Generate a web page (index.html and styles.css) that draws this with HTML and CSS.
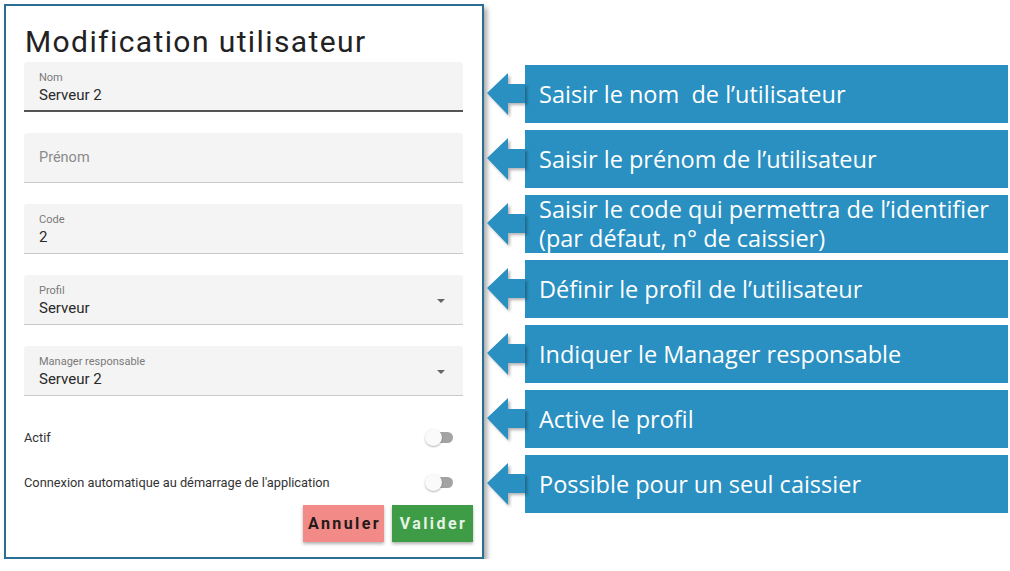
FILE: index.html
```html
<!DOCTYPE html>
<html lang="fr">
<head>
<meta charset="utf-8">
<title>Modification utilisateur</title>
<link rel="stylesheet" href="styles.css">
</head>
<body>
<div class="page">
  <section class="panel">
    <h1 class="title">Modification utilisateur</h1>
    <div class="fields">
      <div class="field field-active">
        <span class="flabel">Nom</span>
        <span class="fvalue">Serveur 2</span>
      </div>
      <div class="field field-empty">
        <span class="fplaceholder">Prénom</span>
      </div>
      <div class="field">
        <span class="flabel">Code</span>
        <span class="fvalue">2</span>
      </div>
      <div class="field field-select">
        <div class="fcol">
          <span class="flabel">Profil</span>
          <span class="fvalue">Serveur</span>
        </div>
        <span class="caret"></span>
      </div>
      <div class="field field-select">
        <div class="fcol">
          <span class="flabel">Manager responsable</span>
          <span class="fvalue">Serveur 2</span>
        </div>
        <span class="caret"></span>
      </div>
    </div>
    <div class="switches">
      <div class="switch-row">
        <span class="switch-label">Actif</span>
        <span class="switch"><span class="thumb"></span></span>
      </div>
      <div class="switch-row">
        <span class="switch-label">Connexion automatique au démarrage de l'application</span>
        <span class="switch"><span class="thumb"></span></span>
      </div>
    </div>
    <div class="actions">
      <button class="btn btn-cancel">Annuler</button>
      <button class="btn btn-ok">Valider</button>
    </div>
  </section>

  <div class="callouts">
    <div class="callout">
      <svg class="arrow" width="38" height="58" viewBox="0 0 38 58"><polygon points="0,28 21,8 21,19 38,19 38,38 21,38 21,50"/></svg>
      <div class="cbox">Saisir le nom&nbsp; de l’utilisateur</div>
    </div>
    <div class="callout">
      <svg class="arrow" width="38" height="58" viewBox="0 0 38 58"><polygon points="0,28 21,8 21,19 38,19 38,38 21,38 21,50"/></svg>
      <div class="cbox">Saisir le prénom de l’utilisateur</div>
    </div>
    <div class="callout">
      <svg class="arrow" width="38" height="58" viewBox="0 0 38 58"><polygon points="0,28 21,8 21,19 38,19 38,38 21,38 21,50"/></svg>
      <div class="cbox cbox-two"><span class="cline">Saisir le code qui permettra de l’identifier</span><span class="cline">(par défaut, n° de caissier)</span></div>
    </div>
    <div class="callout">
      <svg class="arrow" width="38" height="58" viewBox="0 0 38 58"><polygon points="0,28 21,8 21,19 38,19 38,38 21,38 21,50"/></svg>
      <div class="cbox">Définir le profil de l’utilisateur</div>
    </div>
    <div class="callout">
      <svg class="arrow" width="38" height="58" viewBox="0 0 38 58"><polygon points="0,28 21,8 21,19 38,19 38,38 21,38 21,50"/></svg>
      <div class="cbox">Indiquer le Manager responsable</div>
    </div>
    <div class="callout">
      <svg class="arrow" width="38" height="58" viewBox="0 0 38 58"><polygon points="0,28 21,8 21,19 38,19 38,38 21,38 21,50"/></svg>
      <div class="cbox">Active le profil</div>
    </div>
    <div class="callout">
      <svg class="arrow" width="38" height="58" viewBox="0 0 38 58"><polygon points="0,28 21,8 21,19 38,19 38,38 21,38 21,50"/></svg>
      <div class="cbox">Possible pour un seul caissier</div>
    </div>
  </div>
</div>
</body>
</html>
```

FILE: styles.css
```css
* { box-sizing: border-box; }
html, body { margin: 0; padding: 0; background: #ffffff; }
body { font-family: Roboto, "Liberation Sans", sans-serif; }

.page {
  display: flex;
  align-items: flex-start;
  padding: 4px 0 0 4px;
}

/* ---------- form panel ---------- */
.panel {
  width: 480px;
  height: 555px;
  border: 2px solid #2c6d94;
  background: #fff;
  box-shadow: 3px 4px 5px rgba(0, 0, 0, 0.35);
  padding: 0 19px 0 18px;
  display: flex;
  flex-direction: column;
}

.title {
  margin: 19px 0 0 1px;
  font-family: Roboto, sans-serif;
  font-weight: 400;
  font-size: 30px;
  letter-spacing: 1.4px;
  line-height: 33px;
  color: #222;
}

.fields {
  margin-top: 4px;
  display: flex;
  flex-direction: column;
  gap: 21px;
}

.field {
  height: 50px;
  background: #f4f4f4;
  border-bottom: 1px solid #c9c9c9;
  padding: 9px 15px 0 15px;
  display: flex;
  flex-direction: column;
  border-radius: 3px 3px 0 0;
}
.field-active { border-bottom: 2px solid #555; }
.field-empty { justify-content: center; padding-top: 0; }
.field-select {
  flex-direction: row;
  align-items: flex-start;
  justify-content: space-between;
  padding-right: 18px;
}
.fcol { display: flex; flex-direction: column; }

.flabel {
  font-size: 11px;
  line-height: 13px;
  color: #7a7a7a;
}
.fvalue {
  margin-top: 2px;
  font-size: 15px;
  line-height: 18px;
  color: #2a2a2a;
}
.fplaceholder {
  font-size: 14.5px;
  line-height: 18px;
  color: #8a8a8a;
  margin-top: 1px;
}
.caret {
  margin-top: 15px;
  width: 0;
  height: 0;
  border-left: 4px solid transparent;
  border-right: 4px solid transparent;
  border-top: 4px solid #666;
}

.switches {
  margin-top: 29px;
  display: flex;
  flex-direction: column;
  gap: 21px;
}
.switch-row {
  height: 24px;
  display: flex;
  align-items: center;
  justify-content: space-between;
  padding-right: 10px;
}
.switch-label {
  font-size: 12.8px;
  color: #333;
}
.switch {
  position: relative;
  width: 27px;
  height: 11px;
  border-radius: 6px;
  background: #a3a3a3;
}
.thumb {
  position: absolute;
  left: -1px;
  top: -3px;
  width: 17px;
  height: 17px;
  border-radius: 50%;
  background: #fafafa;
  box-shadow: 0 1px 2px rgba(0, 0, 0, 0.3);
}

.actions {
  margin-top: 11px;
  margin-right: -10px;
  display: flex;
  justify-content: flex-end;
  gap: 8px;
}
.btn {
  width: 81px;
  height: 37px;
  border: none;
  padding: 0;
  font-family: Roboto, sans-serif;
  font-weight: 700;
  font-size: 16px;
  letter-spacing: 2.4px;
  text-indent: 2px;
  box-shadow: 0 2px 3px rgba(0, 0, 0, 0.3);
}
.btn-cancel { background: #f28a88; color: #231a1a; }
.btn-ok { background: #3e9c46; color: #e4f3e4; }

/* ---------- callouts ---------- */
.callouts {
  margin-top: 61px;
  margin-left: 3px;
  display: flex;
  flex-direction: column;
  gap: 7px;
}
.callout {
  display: flex;
  align-items: stretch;
  height: 58px;
}
.arrow {
  display: block;
  flex: none;
  fill: #2a8fc1;
  filter: drop-shadow(2px 2px 1.5px rgba(0, 0, 0, 0.3));
}
.cbox {
  width: 483px;
  background: #2a8fc1;
  color: #fff;
  font-family: "Open Sans", sans-serif;
  font-size: 23.5px;
  line-height: 28px;
  padding-left: 14px;
  display: flex;
  align-items: center;
}
.cbox-two {
  flex-direction: column;
  align-items: flex-start;
  justify-content: center;
  line-height: 29px;
}
.cline { display: block; }
```
